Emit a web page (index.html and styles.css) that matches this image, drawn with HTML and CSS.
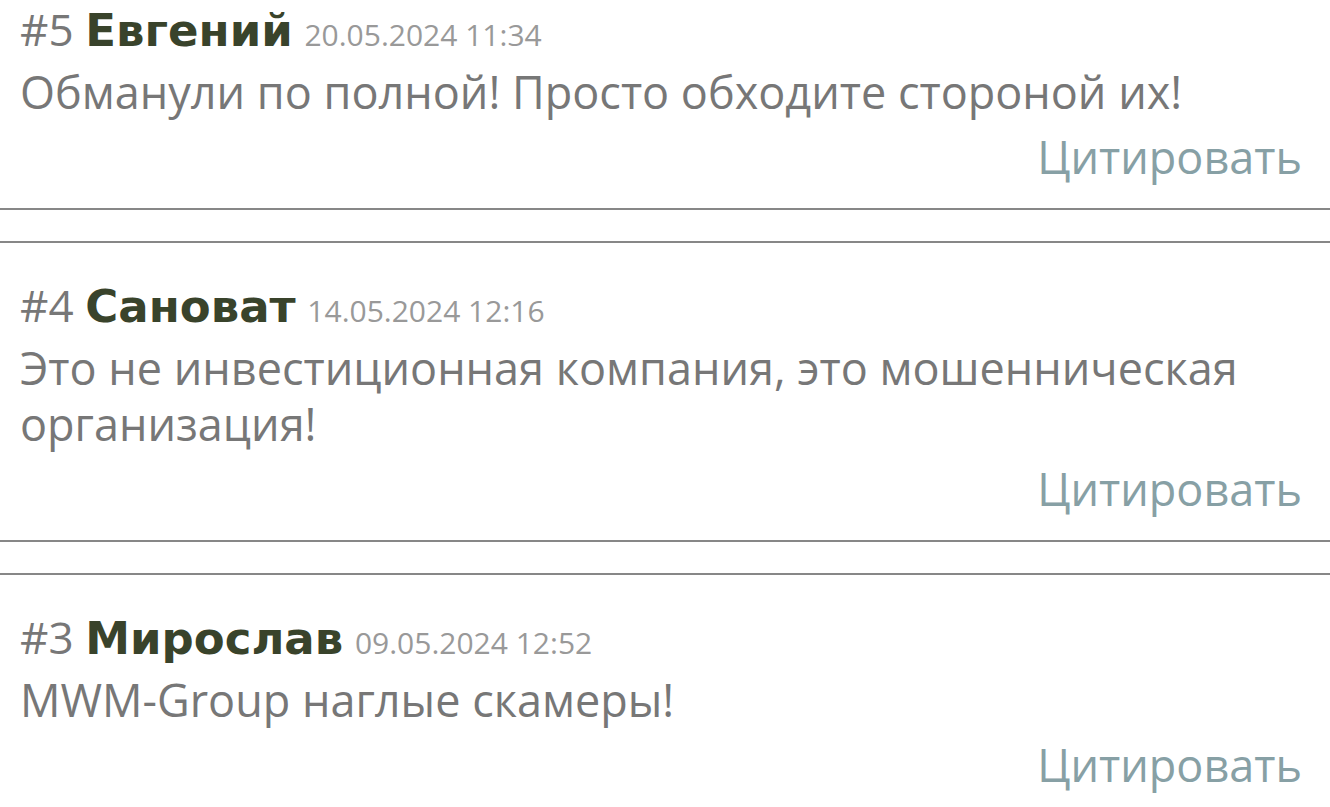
FILE: index.html
```html
<!DOCTYPE html>
<html lang="ru">
<head>
<meta charset="utf-8">
<title>Комментарии</title>
<link rel="stylesheet" href="styles.css">
</head>
<body>
<div class="feed">
  <div class="comment">
    <div class="head"><span class="num">#5</span> <span class="name">Евгений</span> <span class="date">20.05.2024 11:34</span></div>
    <div class="text">Обманули по полной! Просто обходите стороной их!</div>
    <div class="quote"><a href="#">Цитировать</a></div>
  </div>
  <div class="comment">
    <div class="head"><span class="num">#4</span> <span class="name">Сановат</span> <span class="date">14.05.2024 12:16</span></div>
    <div class="text">Это не инвестиционная компания, это мошенническая организация!</div>
    <div class="quote"><a href="#">Цитировать</a></div>
  </div>
  <div class="comment">
    <div class="head"><span class="num">#3</span> <span class="name">Мирослав</span> <span class="date">09.05.2024 12:52</span></div>
    <div class="text">MWM-Group наглые скамеры!</div>
    <div class="quote"><a href="#">Цитировать</a></div>
  </div>
</div>
</body>
</html>
```
FILE: styles.css
```css
html, body {
  margin: 0;
  padding: 0;
  background: #fff;
}
body {
  font-family: "Open Sans", "Liberation Sans", sans-serif;
  color: #777;
  overflow: hidden;
}
.feed {
  margin-top: -35px;
}
.comment {
  border-top: 2px solid #878787;
  border-bottom: 2px solid #878787;
  margin-bottom: 31px;
  padding: 32px 28px 23px 20px;
}
.head {
  font-size: 45px;
  line-height: 60px;
  white-space: nowrap;
}
.num {
  font-size: 44px;
  line-height: 1;
  color: #777;
}
.name {
  font-family: "DejaVu Sans", Verdana, sans-serif;
  font-weight: bold;
  font-size: 45px;
  line-height: 1;
  color: #39432b;
}
.date {
  font-size: 30px;
  line-height: 1;
  color: #999;
}
.text {
  margin-top: 5px;
  font-size: 45px;
  line-height: 56px;
  color: #777;
}
.quote {
  margin-top: 9px;
  font-size: 45px;
  line-height: 56px;
  text-align: right;
}
.quote a {
  color: #87a0a5;
  text-decoration: none;
}
```
